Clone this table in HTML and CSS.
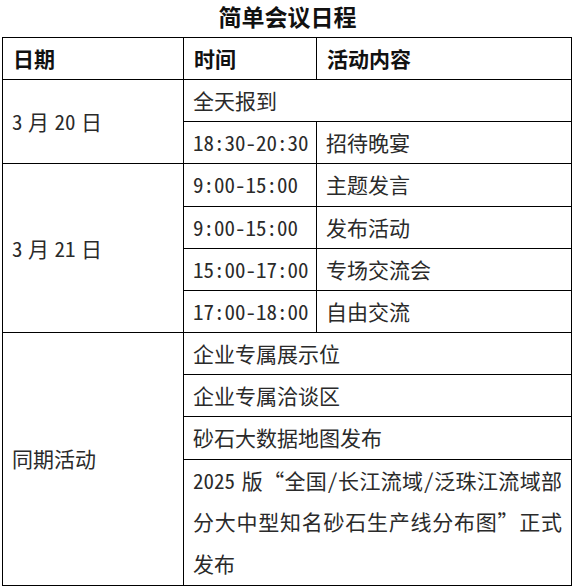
FILE: index.html
```html
<!DOCTYPE html>
<html lang="zh-CN">
<head>
<meta charset="utf-8">
<title>简单会议日程</title>
<link rel="stylesheet" href="styles.css">
</head>
<body>
<h1 class="title">简单会议日程</h1>
<table class="schedule">
  <colgroup>
    <col class="c-date">
    <col class="c-time">
    <col class="c-act">
  </colgroup>
  <thead>
    <tr><th>日期</th><th>时间</th><th>活动内容</th></tr>
  </thead>
  <tbody>
    <tr><td rowspan="2" class="date">3 月 20 日</td><td colspan="2">全天报到</td></tr>
    <tr><td>18:30-20:30</td><td>招待晚宴</td></tr>
    <tr><td rowspan="4" class="date">3 月 21 日</td><td>9:00-15:00</td><td>主题发言</td></tr>
    <tr><td>9:00-15:00</td><td>发布活动</td></tr>
    <tr><td>15:00-17:00</td><td>专场交流会</td></tr>
    <tr><td>17:00-18:00</td><td>自由交流</td></tr>
    <tr><td rowspan="4">同期活动</td><td colspan="2">企业专属展示位</td></tr>
    <tr><td colspan="2">企业专属洽谈区</td></tr>
    <tr><td colspan="2">砂石大数据地图发布</td></tr>
    <tr><td colspan="2" class="long">2025 版“全国/长江流域/泛珠江流域部分大中型知名砂石生产线分布图”正式发布</td></tr>
  </tbody>
</table>
</body>
</html>
```
FILE: styles.css
```css
html, body {
  margin: 0;
  padding: 0;
  background: #fff;
}
body {
  font-family: "Noto Sans CJK SC", "Noto Sans", sans-serif;
  font-feature-settings: "hwid";
  color: #2a2a2a;
}
.title {
  margin: 0;
  height: 37px;
  line-height: 32px;
  text-align: center;
  font-size: 23px;
  font-weight: bold;
  color: #111;
}
.schedule {
  margin-left: 2px;
  width: 569px;
  border-collapse: collapse;
  table-layout: fixed;
  font-size: 21px;
}
.c-date { width: 181px; }
.c-time { width: 133px; }
.c-act { width: 255px; }
.schedule th,
.schedule td {
  border: 1px solid #000;
  padding: 0 0 0 9px;
  line-height: 41.15px;
  text-align: left;
  vertical-align: middle;
  white-space: nowrap;
}
.schedule th {
  font-weight: bold;
  color: #111;
  padding-left: 10px;
}
.schedule td.date {
  word-spacing: -5px;
}
.schedule td.long {
  white-space: normal;
  text-align: justify;
  padding-right: 9px;
  line-height: 41.8px;
  word-spacing: -4px;
}
```
